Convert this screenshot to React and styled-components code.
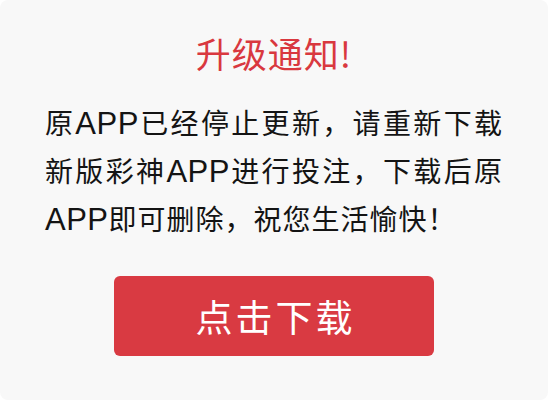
import React from 'react';
import styled, { createGlobalStyle } from 'styled-components';

const GlobalStyle = createGlobalStyle`
  html, body {
    margin: 0;
    padding: 0;
    background: #ffffff;
  }
  body {
    font-family: "Noto Sans CJK SC", "Noto Sans", sans-serif;
  }
`

const Dialog = styled.div`
  width: 548px;
  height: 400px;
  box-sizing: border-box;
  background: #f8f8f8;
  border-radius: 8px;
  display: flex;
  flex-direction: column;
  align-items: center;
  padding: 31px 45px 0;
`

const Title = styled.h1`
  margin: 0;
  font-size: 35px;
  font-weight: 400;
  line-height: 44px;
  letter-spacing: 1px;
  color: #d9383f;
`

const Message = styled.div`
  width: 458px;
  margin-top: 23px;
  color: #141414;
  font-size: 28px;
  letter-spacing: 1px;
`

const Line = styled.div`
  line-height: 48px;
  height: 48px;
  white-space: nowrap;
  text-align: ${p => (p.$justify ? 'justify' : 'left')};
  text-align-last: ${p => (p.$justify ? 'justify' : 'left')};
`

const Latin = styled.span`
  font-family: "Liberation Sans", Arial, sans-serif;
  font-size: 31px;
  letter-spacing: 0.5px;
`

const DownloadButton = styled.button`
  margin-top: 34px;
  width: 320px;
  height: 80px;
  border: none;
  border-radius: 6px;
  background: #d93a42;
  color: #ffffff;
  font-family: "Noto Sans CJK SC", sans-serif;
  font-size: 37px;
  letter-spacing: 3px;
  padding: 0 0 0 3px;
  cursor: pointer;
`

const App = () => {
  return (
    <>
      <GlobalStyle />
      <Dialog>
        <Title>升级通知!</Title>
        <Message>
          <Line $justify>原<Latin>APP</Latin>已经停止更新，请重新下载</Line>
          <Line $justify>新版彩神<Latin>APP</Latin>进行投注，下载后原</Line>
          <Line><Latin>APP</Latin>即可删除，祝您生活愉快！</Line>
        </Message>
        <DownloadButton>点击下载</DownloadButton>
      </Dialog>
    </>
  )
}

export default App
